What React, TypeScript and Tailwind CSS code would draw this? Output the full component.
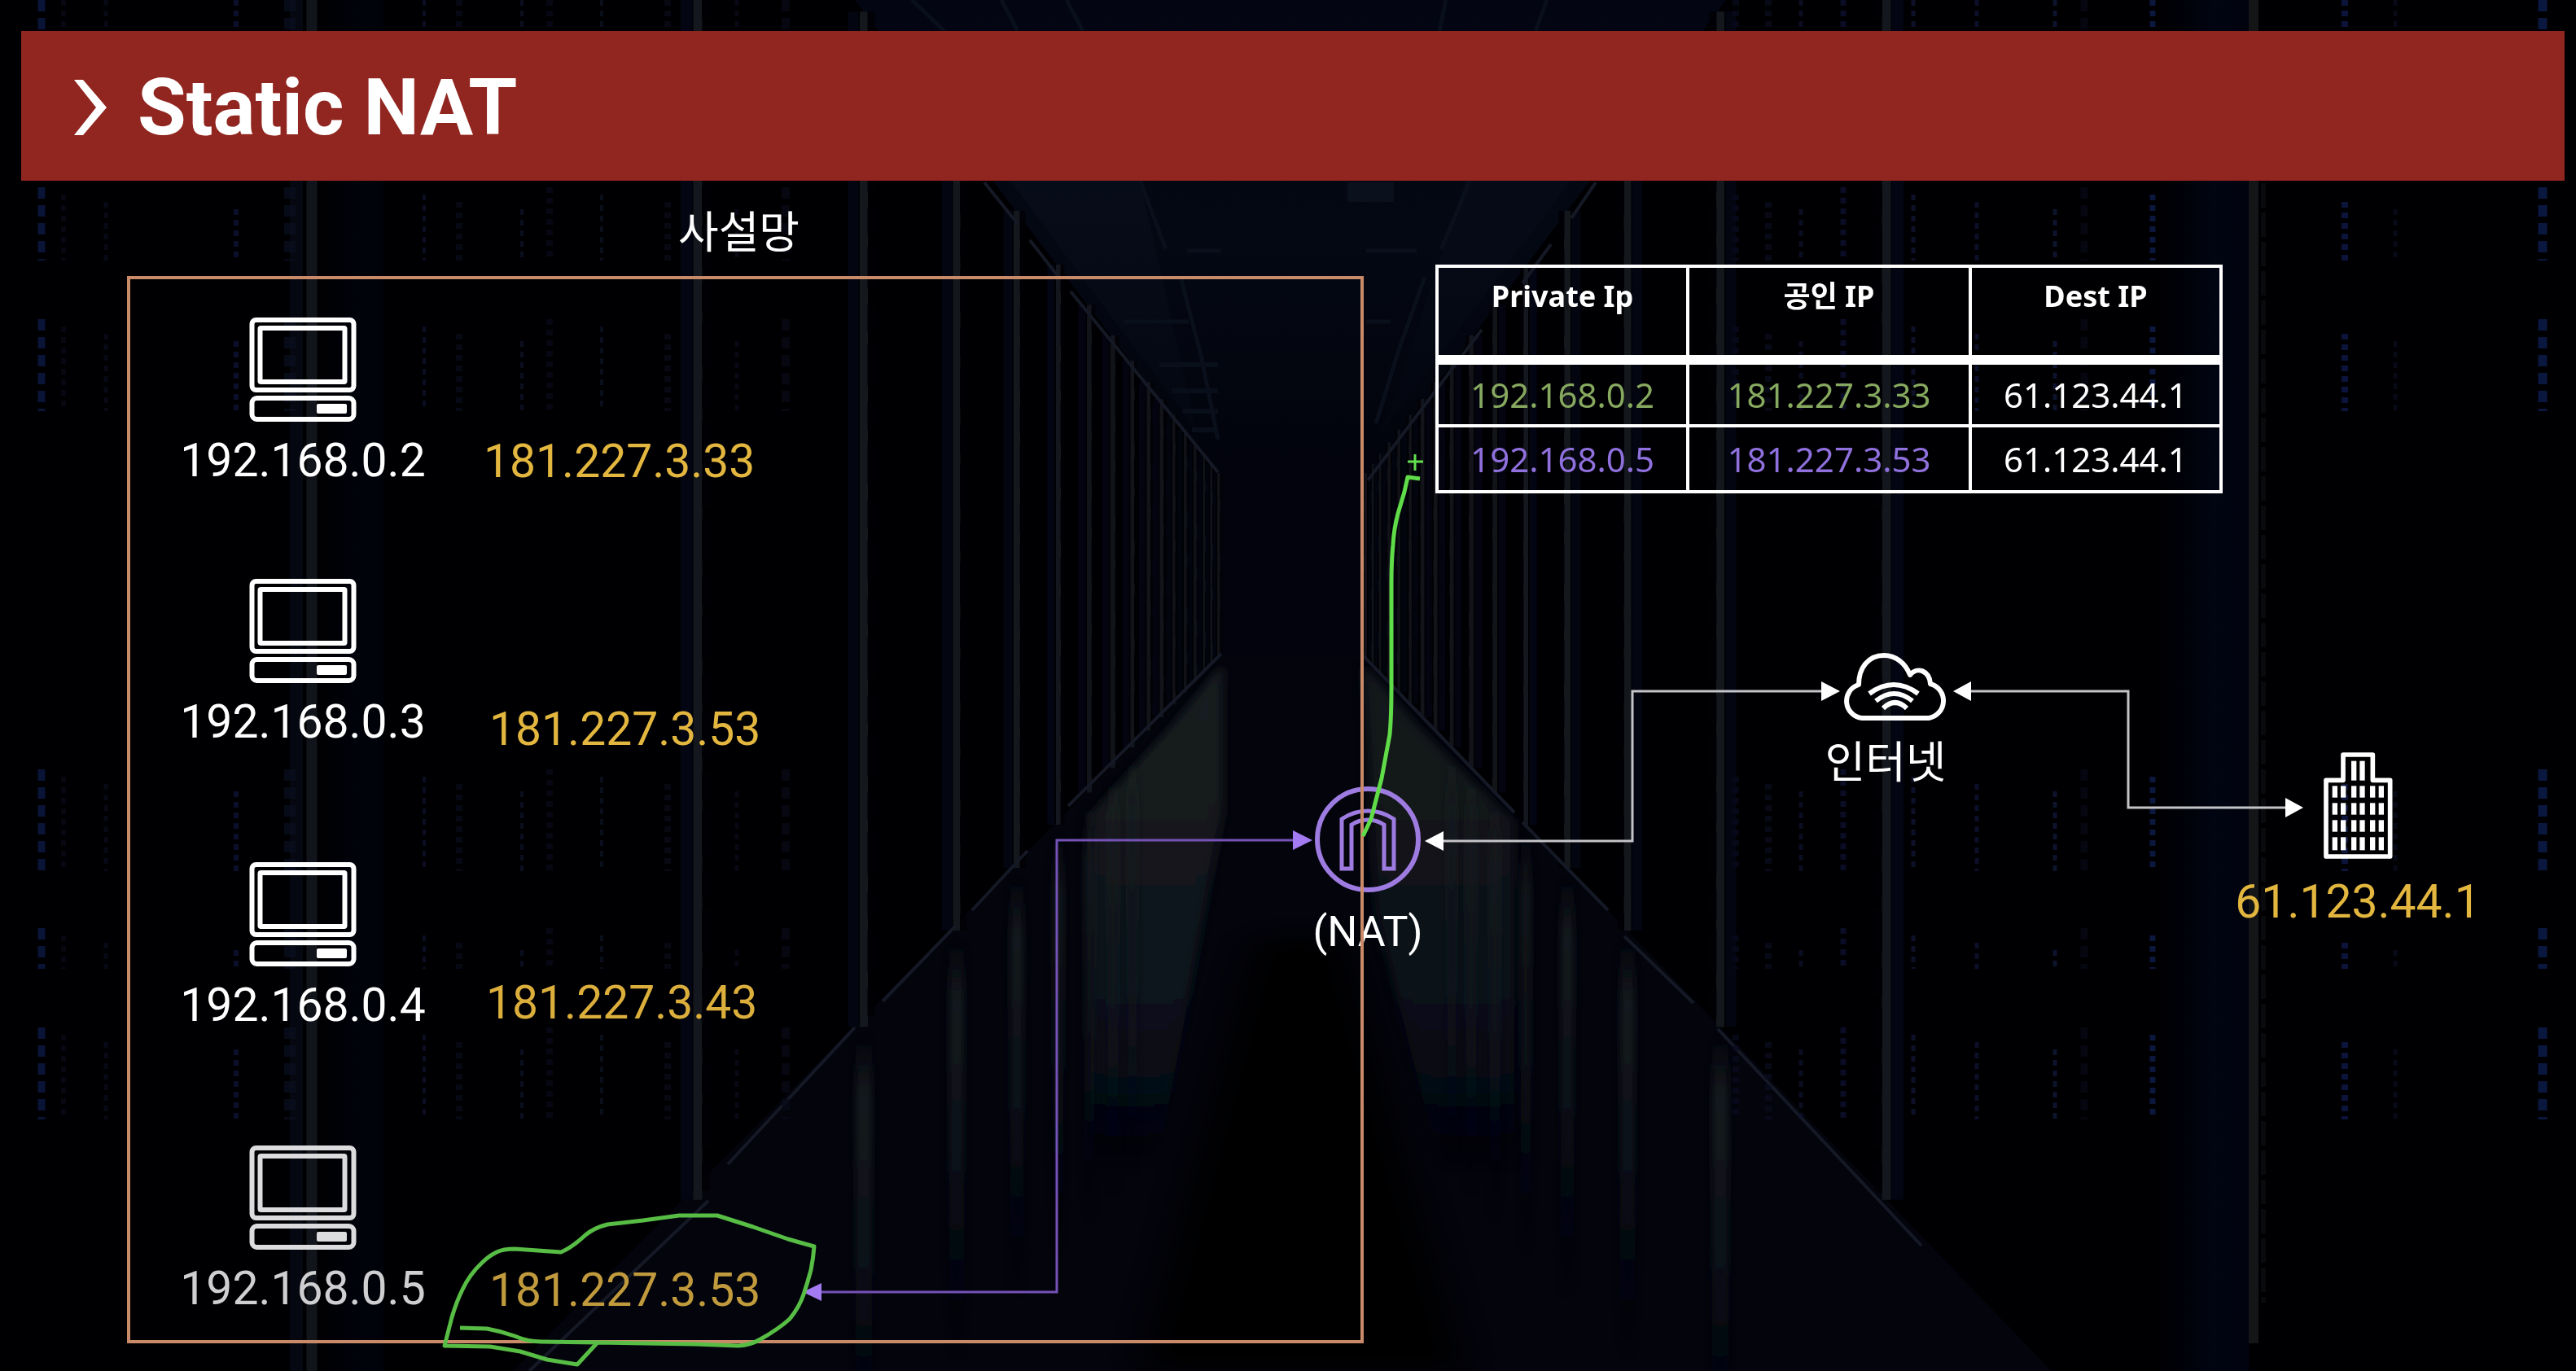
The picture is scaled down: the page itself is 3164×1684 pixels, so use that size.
type Host = { ip: string; faded?: boolean };

const HOSTS: Host[] = [
  { ip: '192.168.0.2' },
  { ip: '192.168.0.3' },
  { ip: '192.168.0.4' },
  { ip: '192.168.0.5', faded: true },
];

const PUBLIC_LABELS = [
  { ip: '181.227.3.33', place: 'left-[594px] top-[535px] text-[#e3b73f]' },
  { ip: '181.227.3.53', place: 'left-[601px] top-[864px] text-[#e3b73f]' },
  { ip: '181.227.3.43', place: 'left-[597px] top-[1200px] text-[#dcae3c]' },
  { ip: '181.227.3.53', place: 'left-[601px] top-[1553px] text-[#c09a3c]' },
];

const NAT_ROWS = [
  { priv: '192.168.0.2', pub: '181.227.3.33', dest: '61.123.44.1', tone: 'text-[#86a85f]' },
  { priv: '192.168.0.5', pub: '181.227.3.53', dest: '61.123.44.1', tone: 'text-[#8f70dc]' },
];

/* Horizontal distances of the rack rails from the corridor's centre line. */
const CENTER = 1587;
const RAILS = [
  { d: 90, w: 4, o: 0.7 },
  { d: 99, w: 3, o: 0.7 },
  { d: 108, w: 3, o: 0.7 },
  { d: 119, w: 4, o: 0.7 },
  { d: 131, w: 4, o: 0.7 },
  { d: 145, w: 4, o: 0.7 },
  { d: 160, w: 5, o: 0.8 },
  { d: 176, w: 5, o: 0.8 },
  { d: 196, w: 5, o: 0.8 },
  { d: 220, w: 6, o: 0.8 },
  { d: 249, w: 6, o: 0.8 },
  { d: 287, w: 6, o: 0.9 },
  { d: 338, w: 8, o: 0.9 },
  { d: 412, w: 9, o: 0.9 },
  { d: 526, w: 10, o: 0.9 },
  { d: 730, w: 11, o: 0.9 },
];

const LEDS = [
  { x: 51, w: 9, c: '#0d1a44', o: 0.8 },
  { x: 78, w: 6, c: '#0a0d1c', o: 0.6 },
  { x: 130, w: 5, c: '#0c1024', o: 0.6 },
  { x: 290, w: 6, c: '#0f1336', o: 0.8 },
  { x: 356, w: 14, c: '#0b1020', o: 0.7 },
  { x: 521, w: 4, c: '#0f1430', o: 0.7 },
  { x: 564, w: 8, c: '#090c1c', o: 0.7 },
  { x: 641, w: 4, c: '#10142c', o: 0.7 },
  { x: 675, w: 8, c: '#090b1a', o: 0.7 },
  { x: 739, w: 4, c: '#0f1328', o: 0.7 },
  { x: 820, w: 8, c: '#0a0c1a', o: 0.7 },
  { x: 905, w: 5, c: '#0a0c1c', o: 0.7 },
  { x: 965, w: 10, c: '#090b18', o: 0.7 },
  { x: 2132, w: 8, c: '#0b0c20', o: 0.7 },
  { x: 2172, w: 8, c: '#0c0e22', o: 0.7 },
  { x: 2212, w: 5, c: '#10132e', o: 0.7 },
  { x: 2264, w: 7, c: '#0e1030', o: 0.8 },
  { x: 2350, w: 5, c: '#121434', o: 0.8 },
  { x: 2428, w: 5, c: '#101332', o: 0.8 },
  { x: 2524, w: 5, c: '#111838', o: 0.8 },
  { x: 2560, w: 9, c: '#090b1a', o: 0.6 },
  { x: 2644, w: 7, c: '#0e1a44', o: 0.9 },
  { x: 2880, w: 8, c: '#0e1742', o: 0.9 },
  { x: 2942, w: 5, c: '#0a0d20', o: 0.7 },
  { x: 3123, w: 11, c: '#0c1a46', o: 0.9 },
];

const LED_RUNS = [
  [0, 38],
  [230, 320],
  [392, 505],
  [945, 1070],
  [1140, 1190],
  [1262, 1375],
];

/* Height of the upper and lower wall edge at a distance from the centre. */
const topEdge = (d: number) => 585 - (d - 87) * 1.3;
const floorEdge = (d: number) => 805 + (d - 87) * 1.04;

function ServerRoom() {
  return (
    <svg
      aria-hidden="true"
      className="pointer-events-none absolute inset-0 size-full"
      viewBox="0 0 3164 1684"
      preserveAspectRatio="none"
    >
      <defs>
        <linearGradient id="ceiling" x1="0" y1="0" x2="0" y2="1">
          <stop offset="0" stopColor="#030612" />
          <stop offset="0.5" stopColor="#040813" />
          <stop offset="1" stopColor="#02030c" />
        </linearGradient>
        <linearGradient id="panel" x1="0" y1="0" x2="0" y2="1">
          <stop offset="0" stopColor="#060c18" />
          <stop offset="1" stopColor="#060c18" stopOpacity="0.2" />
        </linearGradient>
        <linearGradient id="shine" x1="0" y1="0" x2="0" y2="1">
          <stop offset="0" stopColor="#1a1e20" stopOpacity="0" />
          <stop offset="0.15" stopColor="#191d20" />
          <stop offset="0.5" stopColor="#0e151d" />
          <stop offset="1" stopColor="#05070f" stopOpacity="0" />
        </linearGradient>
        <linearGradient id="pool" x1="0" y1="0" x2="0" y2="1">
          <stop offset="0" stopColor="#1a1d20" />
          <stop offset="0.5" stopColor="#10171d" />
          <stop offset="0.8" stopColor="#070d18" />
          <stop offset="1" stopColor="#03040c" stopOpacity="0" />
        </linearGradient>
        <linearGradient id="bay" x1="0" y1="0" x2="1" y2="0">
          <stop offset="0" stopColor="#010410" stopOpacity="0" />
          <stop offset="0.6" stopColor="#010513" />
          <stop offset="1" stopColor="#010410" />
        </linearGradient>
        <filter id="glow" x="-100%" y="-5%" width="300%" height="110%">
          <feGaussianBlur stdDeviation="5 3" />
        </filter>
        <filter id="soft" x="-30%" y="-5%" width="160%" height="110%">
          <feGaussianBlur stdDeviation="7 4" />
        </filter>
        <filter id="softer" x="-50%" y="-10%" width="200%" height="120%">
          <feGaussianBlur stdDeviation="26 14" />
        </filter>
      </defs>

      <rect width="3164" height="1684" fill="#000002" />

      {/* ceiling */}
      <path d="M1050 0H2120L1676 590H1500Z" fill="url(#ceiling)" />
      <path d="M1240 221H1400L1470 530L1500 570Z" fill="url(#panel)" />
      <path d="M1930 221H1800L1710 500L1690 540Z" fill="url(#panel)" opacity="0.7" />
      <g stroke="#0a0f1c" strokeWidth="5" fill="none">
        <path d="M1400 221L1432 306M1450 340L1476 440L1496 540M1806 221L1770 306M1750 340L1718 430L1690 520" />
        <path d="M1458 308H1500M1678 308H1740M1380 395H1460M1678 395H1708" />
        <path d="M1120 0L1160 38M1230 0L1250 38M1310 0L1330 38M1776 0L1768 38M1900 0L1886 38" />
      </g>
      <path d="M1655 224H1712V248H1655Z" fill="#0a101c" />
      {[448, 480, 505, 528].map((y) => (
        <path key={y} d={`M${1400 + (y - 400) / 2} ${y}H1496`} stroke="#080e1a" strokeWidth="6" />
      ))}

      {/* end of the corridor and floor */}
      <rect x="1500" y="560" width="174" height="1124" fill="#02030c" />
      <path d="M1500 805L630 1684H2520L1674 805Z" fill="#03040c" />
      <path d="M1502 815L1440 890L1340 1000V1440H1420L1502 1000Z" fill="url(#pool)" filter="url(#soft)" />
      <path d="M1674 815L1740 890L1860 1010V1440H1770L1690 1120Z" fill="url(#pool)" filter="url(#soft)" opacity="0.85" />
      <path d="M1540 1150L1400 1684H1800L1650 1150Z" fill="#010206" filter="url(#softer)" />

      {/* racks */}
      {RAILS.map(({ d, w, o }) =>
        [-1, 1].map((side) => {
          const x = CENTER + side * d;
          return (
            <g key={side * d} opacity={o}>
              <path d={`M${x} ${topEdge(d)}V${floorEdge(d)}`} stroke="#171a20" strokeWidth={w} />
              <path
                d={`M${x + side * (w + 3)} ${topEdge(d)}V${floorEdge(d)}`}
                stroke="#040614"
                strokeWidth={w + 3}
              />
              <path
                d={`M${x - side * (w - 1)} ${topEdge(d)}V${floorEdge(d)}`}
                stroke="#020206"
                strokeWidth={w - 1}
                strokeDasharray="34 14 52 20"
              />
              {d > 180 && d < 700 && (
                <rect
                  x={x - w}
                  y={floorEdge(d) + 10}
                  width={w * 2}
                  height={520}
                  fill="url(#shine)"
                  filter="url(#glow)"
                />
              )}
            </g>
          );
        }),
      )}
      <path d="M383 0V1684" stroke="#11151b" strokeWidth="13" />
      <path d="M364 0V1684" stroke="#050810" strokeWidth="16" />
      <rect x="391" y="0" width="80" height="1684" fill="url(#bay)" opacity="0.5" />
      <rect x="2650" y="0" width="112" height="1684" fill="url(#bay)" opacity="0.9" />
      <path d="M2768 0V1650" stroke="#141517" strokeWidth="12" />
      <path d="M2780 225V1600" stroke="#090a0e" strokeWidth="6" strokeDasharray="30 6" />

      <g stroke="#151925" strokeWidth="4" fill="none">
        <path d="M1209 224L1250 275M1265 295L1300 340M1315 358L1496 580" />
        <path d="M1960 224L1930 268M1905 300L1870 348M1820 405L1680 590" />
        <path d="M1500 803L1312 990M1262 1045L1194 1118M1174 1137L1084 1230M1050 1262L894 1430M870 1475L650 1684" />
        <path d="M1674 805L1860 998M1870 1010L1975 1118M1995 1150L2080 1232M2110 1264L2360 1530" />
      </g>

      {/* status lights */}
      {LEDS.map(({ x, w, c, o }, i) =>
        LED_RUNS.map(([from, to]) => (
          <path
            key={`${x}-${from}`}
            d={`M${x} ${from + (from > 0 ? (i % 4) * 9 : 0)}V${to}`}
            stroke={c}
            strokeWidth={w}
            strokeDasharray={w > 8 ? '14 8' : '7 6'}
            opacity={o}
          />
        )),
      )}
    </svg>
  );
}

function ComputerIcon({ faded }: { faded?: boolean }) {
  return (
    <svg
      aria-hidden="true"
      className={faded ? 'h-[128px] w-[132px] text-[#dcdcde]' : 'h-[128px] w-[132px] text-white'}
      viewBox="0 0 132 128"
      fill="none"
      stroke="currentColor"
      strokeWidth="6"
    >
      <rect x="3.5" y="3" width="125" height="86" rx="5" />
      <rect x="13.5" y="13" width="104" height="66" rx="1" />
      <rect x="3.5" y="99" width="125" height="26" rx="6" />
      <rect x="83" y="106" width="37" height="12" rx="2" fill="currentColor" stroke="none" />
    </svg>
  );
}

function NatIcon() {
  return (
    <svg aria-hidden="true" className="size-[132px]" viewBox="0 0 132 132" fill="none" stroke="#9d7be0">
      <circle cx="66" cy="66" r="62" strokeWidth="6" />
      <path d="M34 102V41Q49 31 66 31T98 41V102H86V48Q77 42 66 42T46 48V102Z" strokeWidth="5" />
    </svg>
  );
}

function CloudIcon() {
  return (
    <svg
      aria-hidden="true"
      className="h-[84px] w-[131px] overflow-visible"
      viewBox="0 0 131 84"
      fill="none"
      stroke="white"
      strokeWidth="6"
      strokeLinejoin="round"
    >
      <path d="M24 80A21 21 0 0 1 20 39C20 18 32 3 51 3C65 3 77 12 83 27C92 16 107 22 108 38A21.5 21.5 0 0 1 106 80Z" />
      <path d="M33 50Q63 28 93 50M41 59Q63.500 41 86 59M50 68Q64.500 54 79 68" strokeLinejoin="miter" />
    </svg>
  );
}

function BuildingIcon() {
  const columns = [32, 63, 102, 133, 171, 203];
  const rows = [124, 187, 250, 313];
  return (
    <svg aria-hidden="true" className="h-[132px] w-[85px]" viewBox="0 0 255 396" fill="white">
      <path
        d="M9 103H72V9H181V103H245V384H9Z"
        fill="none"
        stroke="white"
        strokeWidth="17"
        strokeLinejoin="round"
      />
      {rows.map((y) =>
        columns.map((x) => <rect key={`${x}-${y}`} x={x} y={y} width="19" height={y === 313 ? 48 : 43} />),
      )}
      <rect x="102" y="32" width="19" height="72" />
      <rect x="133" y="32" width="19" height="72" />
    </svg>
  );
}

function Connectors() {
  return (
    <svg
      aria-hidden="true"
      className="pointer-events-none absolute inset-0 size-full"
      viewBox="0 0 3164 1684"
      preserveAspectRatio="none"
      fill="none"
      strokeWidth="3"
    >
      <path d="M1006 1587H1298V1032H1590" stroke="#7552b8" />
      <path d="M1588 1020V1044L1612 1032ZM1009 1576V1598L986 1587Z" fill="#a47af2" />
      <path d="M1772 1033H2005V849H2238M2420 849H2614V992H2808" stroke="#c4c4c8" />
      <path
        d="M1773 1021V1045L1750 1033ZM2237 837V861L2260 849ZM2421 837V861L2399 849ZM2807 980V1004L2829 992Z"
        fill="white"
      />
    </svg>
  );
}

function PenMarks() {
  return (
    <svg
      aria-hidden="true"
      className="pointer-events-none absolute inset-0 z-20 size-full"
      viewBox="0 0 3164 1684"
      preserveAspectRatio="none"
      fill="none"
      strokeLinejoin="round"
    >
      <path d="M1729 567H1748M1738 558V578" stroke="#62e04e" strokeWidth="3" />
      <path
        d="M1744 588L1729 586L1725 604L1717 631Q1712 650 1711 669Q1709 690 1709 715V845Q1709 880 1707 902L1697 956L1684 1006L1674 1027"
        stroke="#5fdc48"
        strokeWidth="5"
      />
      <path
        d="M565 1631L598 1632Q615 1635 632 1641Q648 1648 665 1648L733 1649L854 1651L907 1653Q922 1652 934 1645Q957 1632 970 1620Q982 1605 987 1590Q992 1575 996 1560Q999 1545 1000 1531L968 1522L925 1507L881 1493H834L790 1499L746 1504Q730 1508 719 1517Q703 1532 689 1538L632 1534Q618 1534 610 1538Q600 1543 592 1551Q577 1565 568 1584Q561 1598 555 1618L546 1653L602 1654L639 1660L672 1670L709 1676L733 1650"
        stroke="#57bd45"
        strokeWidth="5"
      />
    </svg>
  );
}

export default function App() {
  return (
    <main className="relative min-h-screen overflow-hidden bg-black font-['Roboto','Noto_Sans_CJK_KR',sans-serif] text-white">
      <ServerRoom />

      <header className="relative mt-[38px] mr-[14px] ml-[26px] flex h-[184px] items-center gap-[38px] bg-[#91251f] pt-1 pl-[65px]">
        <svg aria-hidden="true" className="h-[68px] w-[40px]" viewBox="0 0 40 68" fill="white">
          <path d="M0 0H11L40 34L11 68H0L27 34Z" />
        </svg>
        <h1 className="text-[97px] leading-none font-bold">Static NAT</h1>
      </header>

      <Connectors />

      <figure className="absolute top-[965px] left-[1580px] flex w-[200px] flex-col items-center">
        <NatIcon />
        <figcaption className="mt-4 text-[52px] leading-[64px]">(NAT)</figcaption>
      </figure>
      <figure className="absolute top-[802px] left-[2228px] flex w-[200px] flex-col items-center">
        <CloudIcon />
        <figcaption className="mt-5 pr-6 text-[54px] leading-[64px]">인터넷</figcaption>
      </figure>
      <figure className="absolute top-[924px] left-[2736px] flex w-[320px] flex-col items-center">
        <BuildingIcon />
        <figcaption className="mt-5 text-[57px] leading-[64px] text-[#e3b73f]">61.123.44.1</figcaption>
      </figure>

      <div className="relative flex items-start pl-[156px]">
        <section className="w-[50.5%]">
          <h2 className="flex h-[117px] items-center justify-center pt-3 pr-4 text-[54px] leading-[64px]">사설망</h2>
          <ul className="flex flex-col gap-[140px] border-4 border-[#c88a68] px-[60px] pt-[47px] pb-[31px]">
            {HOSTS.map(({ ip, faded }) => (
              <li key={ip} className="flex w-[304px] flex-col items-center gap-4 first:-mb-[27px]">
                <ComputerIcon faded={faded} />
                <span
                  className={
                    faded ? 'text-[57px] leading-[64px] text-[#cfcfd2]' : 'text-[57px] leading-[64px]'
                  }
                >
                  {ip}
                </span>
              </li>
            ))}
          </ul>
        </section>

        <div className="mt-[103px] mr-[434px] ml-[88px] flex-1">
          <table className="w-full table-fixed border-collapse border-4 border-white text-center font-['Noto_Sans','Noto_Sans_CJK_KR',sans-serif]">
            <thead>
              <tr className="h-[115px] border-b-[12px] border-white align-top text-[36px] leading-[48px]">
                <th className="w-[32%] border-x-4 border-white pt-[11px] font-bold">Private Ip</th>
                <th className="w-[36%] border-x-4 border-white pt-[11px] font-bold">공인 IP</th>
                <th className="w-[32%] border-x-4 border-white pt-[11px] font-bold">Dest IP</th>
              </tr>
            </thead>
            <tbody>
              {NAT_ROWS.map(({ priv, pub, dest, tone }) => (
                <tr key={priv} className="h-[81px] text-[42px] leading-[56px]">
                  <td className={`border-4 border-white ${tone}`}>{priv}</td>
                  <td className={`border-4 border-white ${tone}`}>{pub}</td>
                  <td className="border-4 border-white">{dest}</td>
                </tr>
              ))}
            </tbody>
          </table>
        </div>
      </div>

      {PUBLIC_LABELS.map(({ ip, place }) => (
        <span key={place} className={`absolute text-[57px] leading-[64px] ${place}`}>
          {ip}
        </span>
      ))}

      <PenMarks />
    </main>
  );
}
